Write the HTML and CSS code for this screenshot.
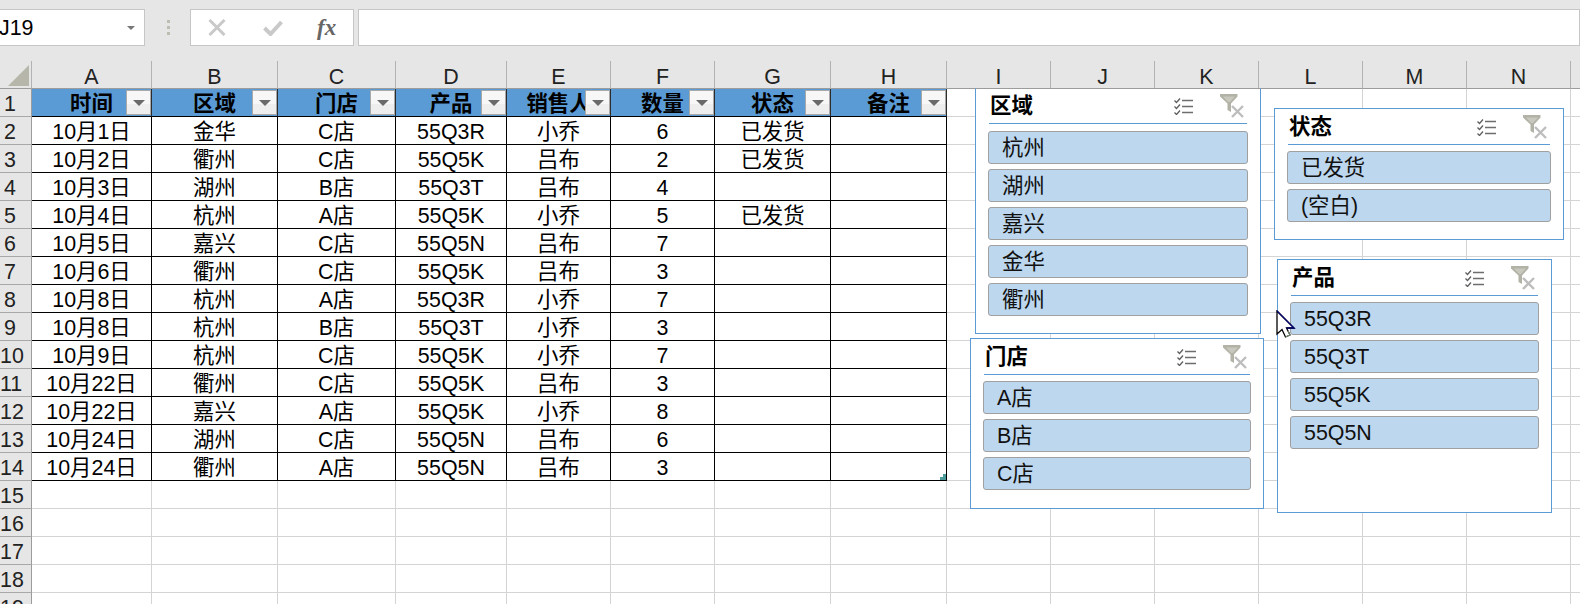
FILE: index.html
```html
<!DOCTYPE html>
<html lang="zh-CN">
<head>
<meta charset="utf-8">
<title>Excel 切片器</title>
<link rel="stylesheet" href="styles.css">
</head>
<body>
<div class="app">
  <div class="formula-bar">
    <div class="name-box"><span class="name-text">J19</span><span class="name-arrow"></span></div>
    <div class="grip"><i></i><i></i><i></i></div>
    <div class="fx-tools">
      <svg class="tool-x" width="18" height="17" viewBox="0 0 18 17"><path d="M1.5 1 16.5 16M16.5 1 1.5 16" stroke="#c9c9c9" stroke-width="3" fill="none"/></svg>
      <svg class="tool-check" width="20" height="16" viewBox="0 0 20 16"><path d="M1.5 8 7.5 14 18.5 2" stroke="#c9c9c9" stroke-width="4" fill="none"/></svg>
      <span class="tool-fx">fx</span>
    </div>
    <div class="formula-input"></div>
  </div>
  <div class="sheet">
    <table class="grid">
      <colgroup>
        <col class="w-rh"><col class="w-a"><col class="w-b"><col class="w-c"><col class="w-d"><col class="w-e"><col class="w-f"><col class="w-g"><col class="w-h"><col class="w-n"><col class="w-n"><col class="w-n"><col class="w-n"><col class="w-n"><col class="w-n"><col class="w-o">
      </colgroup>
      <tr class="cols"><td class="corner"><svg width="21" height="21" viewBox="0 0 21 21"><path d="M21 0V21H0Z" fill="#b6b6aa"/></svg></td><td>A</td><td>B</td><td>C</td><td>D</td><td>E</td><td>F</td><td>G</td><td>H</td><td>I</td><td>J</td><td>K</td><td>L</td><td>M</td><td>N</td><td></td></tr>
      <tr class="head"><td class="rh">1</td><td>时间<span class="filter"></span></td><td>区域<span class="filter"></span></td><td>门店<span class="filter"></span></td><td>产品<span class="filter"></span></td><td>销售人<span class="filter"></span></td><td>数量<span class="filter"></span></td><td>状态<span class="filter"></span></td><td>备注<span class="filter"></span></td><td></td><td></td><td></td><td></td><td></td><td></td><td></td></tr>
      <tr class="data"><td class="rh">2</td><td>10月1日</td><td>金华</td><td>C店</td><td>55Q3R</td><td>小乔</td><td>6</td><td>已发货</td><td></td><td></td><td></td><td></td><td></td><td></td><td></td><td></td></tr>
      <tr class="data"><td class="rh">3</td><td>10月2日</td><td>衢州</td><td>C店</td><td>55Q5K</td><td>吕布</td><td>2</td><td>已发货</td><td></td><td></td><td></td><td></td><td></td><td></td><td></td><td></td></tr>
      <tr class="data"><td class="rh">4</td><td>10月3日</td><td>湖州</td><td>B店</td><td>55Q3T</td><td>吕布</td><td>4</td><td></td><td></td><td></td><td></td><td></td><td></td><td></td><td></td><td></td></tr>
      <tr class="data"><td class="rh">5</td><td>10月4日</td><td>杭州</td><td>A店</td><td>55Q5K</td><td>小乔</td><td>5</td><td>已发货</td><td></td><td></td><td></td><td></td><td></td><td></td><td></td><td></td></tr>
      <tr class="data"><td class="rh">6</td><td>10月5日</td><td>嘉兴</td><td>C店</td><td>55Q5N</td><td>吕布</td><td>7</td><td></td><td></td><td></td><td></td><td></td><td></td><td></td><td></td><td></td></tr>
      <tr class="data"><td class="rh">7</td><td>10月6日</td><td>衢州</td><td>C店</td><td>55Q5K</td><td>吕布</td><td>3</td><td></td><td></td><td></td><td></td><td></td><td></td><td></td><td></td><td></td></tr>
      <tr class="data"><td class="rh">8</td><td>10月8日</td><td>杭州</td><td>A店</td><td>55Q3R</td><td>小乔</td><td>7</td><td></td><td></td><td></td><td></td><td></td><td></td><td></td><td></td><td></td></tr>
      <tr class="data"><td class="rh">9</td><td>10月8日</td><td>杭州</td><td>B店</td><td>55Q3T</td><td>小乔</td><td>3</td><td></td><td></td><td></td><td></td><td></td><td></td><td></td><td></td><td></td></tr>
      <tr class="data"><td class="rh">10</td><td>10月9日</td><td>杭州</td><td>C店</td><td>55Q5K</td><td>小乔</td><td>7</td><td></td><td></td><td></td><td></td><td></td><td></td><td></td><td></td><td></td></tr>
      <tr class="data"><td class="rh">11</td><td>10月22日</td><td>衢州</td><td>C店</td><td>55Q5K</td><td>吕布</td><td>3</td><td></td><td></td><td></td><td></td><td></td><td></td><td></td><td></td><td></td></tr>
      <tr class="data"><td class="rh">12</td><td>10月22日</td><td>嘉兴</td><td>A店</td><td>55Q5K</td><td>小乔</td><td>8</td><td></td><td></td><td></td><td></td><td></td><td></td><td></td><td></td><td></td></tr>
      <tr class="data"><td class="rh">13</td><td>10月24日</td><td>湖州</td><td>C店</td><td>55Q5N</td><td>吕布</td><td>6</td><td></td><td></td><td></td><td></td><td></td><td></td><td></td><td></td><td></td></tr>
      <tr class="data"><td class="rh">14</td><td>10月24日</td><td>衢州</td><td>A店</td><td>55Q5N</td><td>吕布</td><td>3</td><td></td><td class="last-cell"><span class="resize-handle"></span></td><td></td><td></td><td></td><td></td><td></td><td></td><td></td></tr>
      <tr><td class="rh">15</td><td></td><td></td><td></td><td></td><td></td><td></td><td></td><td></td><td></td><td></td><td></td><td></td><td></td><td></td><td></td></tr>
      <tr><td class="rh">16</td><td></td><td></td><td></td><td></td><td></td><td></td><td></td><td></td><td></td><td></td><td></td><td></td><td></td><td></td><td></td></tr>
      <tr><td class="rh">17</td><td></td><td></td><td></td><td></td><td></td><td></td><td></td><td></td><td></td><td></td><td></td><td></td><td></td><td></td><td></td></tr>
      <tr><td class="rh">18</td><td></td><td></td><td></td><td></td><td></td><td></td><td></td><td></td><td></td><td></td><td></td><td></td><td></td><td></td><td></td></tr>
      <tr><td class="rh">19</td><td></td><td></td><td></td><td></td><td></td><td></td><td></td><td></td><td></td><td></td><td></td><td></td><td></td><td></td><td></td></tr>
    </table>

    <section class="slicer slicer-region">
      <header class="slicer-head"><h2>区域</h2>
        <svg class="ico-multi" width="19" height="17" viewBox="0 0 19 17"><use href="#multi"/></svg>
        <svg class="ico-clear" width="24" height="24" viewBox="0 0 24 24"><use href="#clear"/></svg>
      </header>
      <ul class="slicer-items"><li>杭州</li><li>湖州</li><li>嘉兴</li><li>金华</li><li>衢州</li></ul>
    </section>
    <section class="slicer slicer-status">
      <header class="slicer-head"><h2>状态</h2>
        <svg class="ico-multi" width="19" height="17" viewBox="0 0 19 17"><use href="#multi"/></svg>
        <svg class="ico-clear" width="24" height="24" viewBox="0 0 24 24"><use href="#clear"/></svg>
      </header>
      <ul class="slicer-items"><li>已发货</li><li>(空白)</li></ul>
    </section>
    <section class="slicer slicer-product">
      <header class="slicer-head"><h2>产品</h2>
        <svg class="ico-multi" width="19" height="17" viewBox="0 0 19 17"><use href="#multi"/></svg>
        <svg class="ico-clear" width="24" height="24" viewBox="0 0 24 24"><use href="#clear"/></svg>
      </header>
      <ul class="slicer-items"><li>55Q3R</li><li>55Q3T</li><li>55Q5K</li><li>55Q5N</li></ul>
    </section>
    <section class="slicer slicer-store">
      <header class="slicer-head"><h2>门店</h2>
        <svg class="ico-multi" width="19" height="17" viewBox="0 0 19 17"><use href="#multi"/></svg>
        <svg class="ico-clear" width="24" height="24" viewBox="0 0 24 24"><use href="#clear"/></svg>
      </header>
      <ul class="slicer-items"><li>A店</li><li>B店</li><li>C店</li></ul>
    </section>

    <svg class="cursor" width="20" height="29" viewBox="0 0 20 29">
      <path d="M1 1V24L6 19.5 9.5 27 14 25 10.5 18H18Z" fill="#fff" stroke="#000" stroke-width="1.3"/>
      <path d="M1 1 18 18H10.5" fill="none" stroke="#00006e" stroke-width="1.3"/>
      <path d="M9.5 27 14 25 12 21" fill="none" stroke="#7f9a7f" stroke-width="1"/>
    </svg>
  </div>
</div>
<svg class="defs" width="0" height="0">
  <defs>
    <g id="multi" fill="none">
      <path d="M0.5 2.5 2.5 4.5 6 0.5M0.5 8.5 2.5 10.5 6 6.5M0.5 14.5 2.5 16.5 6 12.5" stroke="#5e5e5e" stroke-width="1.3"/>
      <path d="M8 2.5H19M8 8.5H19M8 14.5H19" stroke="#6e6e6e" stroke-width="1.3"/>
    </g>
    <g id="clear">
      <path d="M0 0H17.5V2.5L11 9.5V18L7.5 16V9.5L0 2.5Z" fill="#b2b2a6"/>
      <path d="M3 2.5H15L10 8H8Z" fill="#c8c8be"/>
      <path d="M12 12 23 23M23 12 12 23" stroke="#bdbdbd" stroke-width="2.4" fill="none"/>
    </g>
  </defs>
</svg>
</body>
</html>
```

FILE: styles.css
```css
* { box-sizing: border-box; }
html, body { margin: 0; padding: 0; }
body {
  width: 1580px;
  height: 604px;
  overflow: hidden;
  background: #fff;
  color: #000;
  font-family: "Liberation Sans", "Noto Sans CJK SC", sans-serif;
  font-size: 21.4px;
}
.defs { position: absolute; }

/* formula bar */
.formula-bar {
  height: 61px;
  background: #e6e6e6;
  display: flex;
  align-items: flex-start;
  padding-top: 9px;
}
.name-box {
  width: 147px;
  height: 37px;
  margin-left: -2px;
  background: #fff;
  border: 1px solid #c6c6c6;
  display: flex;
  align-items: center;
  justify-content: space-between;
  padding-right: 9px;
  line-height: 35px;
}
.name-text { padding-top: 2px; }
.name-arrow {
  width: 0;
  height: 0;
  border-left: 4px solid transparent;
  border-right: 4px solid transparent;
  border-top: 4px solid #777;
}
.grip {
  width: 45px;
  height: 37px;
  display: flex;
  flex-direction: column;
  align-items: center;
  justify-content: center;
  gap: 3px;
  padding-left: 1px;
}
.grip i { width: 3px; height: 3px; background: #bdbdb2; display: block; }
.fx-tools {
  width: 164px;
  height: 37px;
  background: #fff;
  border: 1px solid #c6c6c6;
  display: flex;
  align-items: center;
  padding-left: 17px;
}
.tool-check { margin-left: 37px; }
.tool-fx {
  margin-left: 34px;
  font-family: "Liberation Serif", serif;
  font-style: italic;
  font-weight: 700;
  font-size: 23px;
  color: #666;
  line-height: 35px;
}
.formula-input {
  flex: 1;
  height: 37px;
  margin-left: 4px;
  background: #fff;
  border: 1px solid #c6c6c6;
}

/* grid */
.sheet { position: relative; }
.grid {
  border-collapse: separate;
  border-spacing: 0;
  table-layout: fixed;
  width: 1580px;
}
.w-rh { width: 32px; }
.w-a { width: 120px; }
.w-b { width: 126px; }
.w-c { width: 118px; }
.w-d { width: 111px; }
.w-e { width: 104px; }
.w-f { width: 104px; }
.w-g { width: 116px; }
.w-h { width: 116px; }
.w-n { width: 104px; }
.w-o { width: 10px; }
.grid td {
  height: 28px;
  padding: 4px 0 0;
  text-align: center;
  vertical-align: middle;
  line-height: 23px;
  white-space: nowrap;
  overflow: hidden;
  border-right: 1px solid #d4d4d4;
  border-bottom: 1px solid #d4d4d4;
}
.grid .cols td {
  background: #e6e6e6;
  color: #222;
  border-right-color: #b2b2b2;
  border-bottom-color: #9c9c9c;
  padding-top: 6px;
  line-height: 21px;
}
.grid .cols .corner {
  text-align: left;
  padding: 0;
  position: relative;
}
.corner svg { position: absolute; left: 8px; top: 4px; }
.grid .rh {
  background: #e6e6e6;
  color: #222;
  border-right-color: #9c9c9c;
  border-bottom-color: #a8a8a8;
  padding-right: 11px;
}
.grid .head td:nth-child(-n+9):not(.rh) {
  background: #5b9bd5;
  font-weight: 700;
  position: relative;
  border-right-color: #2c2c2c;
  border-bottom-color: #000;
}
.grid .data td:nth-child(-n+9):not(.rh) {
  border-right-color: #000;
  border-bottom-color: #000;
}
.filter {
  position: absolute;
  right: 0;
  top: 1px;
  width: 25px;
  height: 25px;
  border: 1px solid #a9a9a9;
  background: linear-gradient(#f7f7f7 0 55%, #eeeeee 55%);
}
.filter::after {
  content: "";
  position: absolute;
  left: 6px;
  top: 9px;
  border-left: 6px solid transparent;
  border-right: 6px solid transparent;
  border-top: 6px solid #6a6a6a;
}
.grid .last-cell { position: relative; }
.resize-handle {
  position: absolute;
  right: 0;
  bottom: 0;
  width: 6px;
  height: 6px;
  background: #4c9a9a;
  clip-path: polygon(50% 0, 100% 0, 100% 100%, 0 100%, 0 50%, 50% 50%);
}

/* slicers */
.slicer {
  position: absolute;
  background: #fff;
  border: 1px solid #5b9bd5;
  padding: 0 12px;
}
.slicer-region { left: 975px; top: 27px; width: 286px; height: 246px; border-top-color: #9c9c9c; }
.slicer-status { left: 1274px; top: 47px; width: 290px; height: 132px; }
.slicer-product { left: 1277px; top: 198px; width: 275px; height: 254px; }
.slicer-store { left: 970px; top: 277px; width: 294px; height: 171px; }
.slicer-head {
  height: 36px;
  margin: 0 1px 6px;
  border-bottom: 1px solid #5b9bd5;
  display: flex;
  align-items: center;
  padding: 0 3px 0 1px;
}
.slicer-region .slicer-head { height: 35px; margin-bottom: 7px; }
.slicer-head h2 {
  flex: 1;
  margin: 0;
  font-size: 21.4px;
  font-weight: 700;
  line-height: 34px;
}
.ico-clear { margin-left: 27px; }
.ico-multi { margin-top: 1px; }
.slicer-items {
  list-style: none;
  margin: 0;
  padding: 0;
  display: flex;
  flex-direction: column;
  gap: 5px;
}
.slicer-items li {
  height: 33px;
  line-height: 33px;
  padding-left: 13px;
  background: #bdd7ee;
  border: 1px solid #a0a0a0;
  border-radius: 3px;
  color: #111;
}
.cursor {
  position: absolute;
  left: 1276px;
  top: 249px;
}
```
